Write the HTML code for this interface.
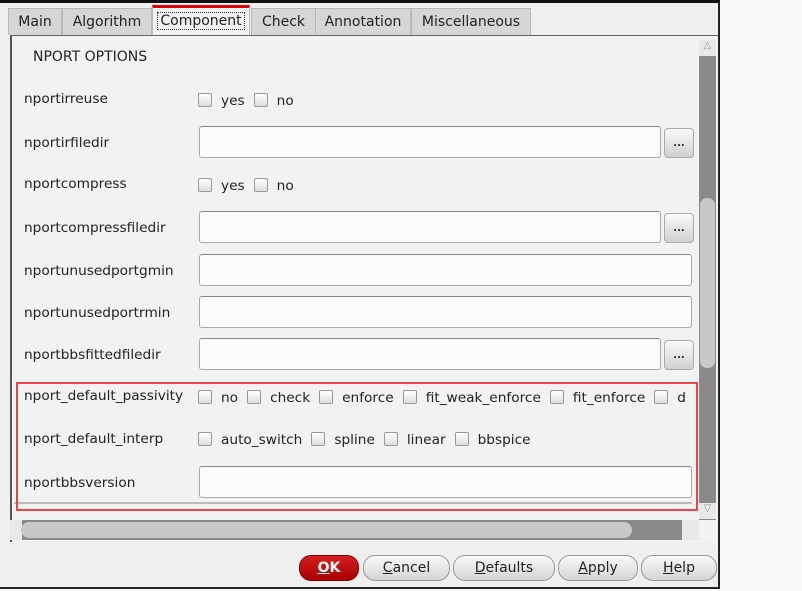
<!DOCTYPE html><html><head><style>
body{margin:0;width:802px;height:591px;background:#fafafa;position:relative;overflow:hidden;font-family:"DejaVu Sans","Liberation Sans",sans-serif;font-size:13.7px;color:#222}
.a{position:absolute}
.win{left:0;top:0;width:718px;height:584px;background:#efefef;border-top:3px solid #111;border-right:2px solid #222;border-bottom:2px solid #222}
.tab{top:8px;height:26px;line-height:26px;background:#d6d6d6;border:1px solid #b8b8b8;border-bottom:none;text-align:center;font-size:14px}
.panel{left:10px;top:35px;width:706px;height:506px;background:#f2f2f2;border-left:2px solid #555;border-top:1px solid #666}
.lbl{left:24px;font-size:13.7px}
.inp{left:199px;height:30px;background:#fbfbfb;border:1px solid #aaa;border-top-color:#888;border-radius:3px}
.dot{left:664px;width:28px;height:28px;border:1px solid #aaa;border-radius:4px;background:linear-gradient(#fafafa,#d0d0d0);text-align:center;font-size:10px;line-height:30px;font-weight:bold}
.cb{display:inline-block;width:12px;height:12px;border:1px solid #999;border-radius:2px;background:linear-gradient(#fff,#ddd);vertical-align:-2px;margin-right:9px}
.cb.n{margin-left:9px}
.opt{font-size:13.7px;white-space:nowrap}
.btn{top:555px;height:24px;border:1px solid #999;border-radius:12px;background:linear-gradient(#fafafa,#d4d4d4);text-align:center;line-height:24px;font-size:14px}
</style></head><body>
<div class="a win"></div>
<div class="a tab" style="left:8px;width:52px">Main</div>
<div class="a tab" style="left:62px;width:88px">Algorithm</div>
<div class="a tab" style="left:152px;width:96px;background:#f2f2f2;border-top:3px solid #d00;top:5px;height:30px"><span style="border:1px dotted #333;padding:0 2px">Component</span></div>
<div class="a tab" style="left:251px;width:63px">Check</div>
<div class="a tab" style="left:315px;width:94px">Annotation</div>
<div class="a tab" style="left:411px;width:118px">Miscellaneous</div>
<div class="a panel"></div>
<div class="a" style="left:33px;top:49px;font-size:14px">NPORT OPTIONS</div>

<div class="a lbl" style="top:91px">nportirreuse</div>
<div class="a opt" style="left:198px;top:93px"><span class="cb"></span>yes<span class="cb n"></span>no</div>
<div class="a lbl" style="top:135px">nportirfiledir</div>
<div class="a inp" style="top:126px;width:460px"></div><div class="a dot" style="top:128px">...</div>
<div class="a lbl" style="top:176px">nportcompress</div>
<div class="a opt" style="left:198px;top:178px"><span class="cb"></span>yes<span class="cb n"></span>no</div>
<div class="a lbl" style="top:220px">nportcompressfiledir</div>
<div class="a inp" style="top:211px;width:460px"></div><div class="a dot" style="top:213px">...</div>
<div class="a lbl" style="top:263px">nportunusedportgmin</div>
<div class="a inp" style="top:254px;width:491px"></div>
<div class="a lbl" style="top:305px">nportunusedportrmin</div>
<div class="a inp" style="top:296px;width:491px"></div>
<div class="a lbl" style="top:347px">nportbbsfittedfiledir</div>
<div class="a inp" style="top:338px;width:460px"></div><div class="a dot" style="top:340px">...</div>
<div class="a lbl" style="top:388px">nport_default_passivity</div>
<div class="a opt" style="left:198px;top:390px;width:492px;overflow:hidden"><span class="cb"></span>no<span class="cb n"></span>check<span class="cb n"></span>enforce<span class="cb n"></span>fit_weak_enforce<span class="cb n"></span>fit_enforce<span class="cb n"></span>d</div>
<div class="a lbl" style="top:431px">nport_default_interp</div>
<div class="a opt" style="left:198px;top:432px"><span class="cb"></span>auto_switch<span class="cb n"></span>spline<span class="cb n"></span>linear<span class="cb n"></span>bbspice</div>
<div class="a lbl" style="top:475px">nportbbsversion</div>
<div class="a inp" style="top:466px;width:491px"></div>
<div class="a" style="left:14px;top:502px;width:678px;height:2px;background:#bbb"></div>
<div class="a" style="left:16px;top:382px;width:678px;height:125px;border:2px solid #e84545"></div>

<div class="a" style="left:699px;top:40px;width:17px;height:480px;background:#8a8a8a"></div>
<div class="a" style="left:699px;top:40px;width:17px;height:16px;background:#e8e8e8;font-size:10px;text-align:center;color:#999">△</div>
<div class="a" style="left:699px;top:503px;width:17px;height:16px;background:#e8e8e8;font-size:10px;text-align:center;color:#999">▽</div>
<div class="a" style="left:700px;top:198px;width:15px;height:170px;background:#c8c8c8;border-radius:7px"></div>
<div class="a" style="left:10px;top:520px;width:689px;height:20px;background:#8a8a8a"></div>
<div class="a" style="left:10px;top:520px;width:12px;height:20px;background:#e8e8e8"></div>
<div class="a" style="left:682px;top:520px;width:17px;height:20px;background:#e8e8e8"></div>
<div class="a" style="left:21px;top:522px;width:611px;height:16px;background:#c8c8c8;border-radius:8px"></div>

<div class="a btn" style="left:299px;width:58px;background:linear-gradient(#d42020,#a00);color:#fff;font-weight:bold;border-color:#800"><u>O</u>K</div>
<div class="a btn" style="left:363px;width:85px"><u>C</u>ancel</div>
<div class="a btn" style="left:453px;width:100px"><u>D</u>efaults</div>
<div class="a btn" style="left:558px;width:78px"><u>A</u>pply</div>
<div class="a btn" style="left:641px;width:74px"><u>H</u>elp</div>
</body></html>
